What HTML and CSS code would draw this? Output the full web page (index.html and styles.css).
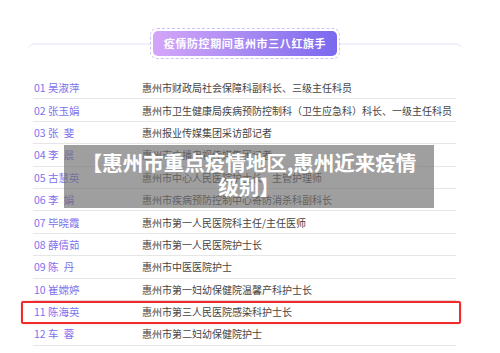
FILE: index.html
```html
<!DOCTYPE html>
<html lang="zh-CN">
<head>
<meta charset="utf-8">
<title>疫情防控期间惠州市三八红旗手</title>
<link rel="stylesheet" href="styles.css">
</head>
<body>
<div class="page">
  <div class="head">
    <div class="pill"><div class="pill-inner">疫情防控期间惠州市三八红旗手</div></div>
  </div>
  <div class="card">
    <ul class="list">
      <li class="row"><span class="name">01 吴淑萍</span><span class="job">惠州市财政局社会保障科副科长、三级主任科员</span></li>
      <li class="row"><span class="name">02 张玉娟</span><span class="job">惠州市卫生健康局疾病预防控制科（卫生应急科）科长、一级主任科员</span></li>
      <li class="row"><span class="name">03 张&ensp;斐</span><span class="job">惠州报业传媒集团采访部记者</span></li>
      <li class="row"><span class="name">04 李&ensp;晨</span><span class="job">惠州市广播电视传媒集团记者</span></li>
      <li class="row"><span class="name">05 古慧英</span><span class="job">惠州市中心人民医院护士长　主管护理师</span></li>
      <li class="row"><span class="name">06 李&ensp;娟</span><span class="job">惠州市疾病预防控制中心寄防消杀科副科长</span></li>
      <li class="row"><span class="name">07 毕晓霞</span><span class="job">惠州市第一人民医院科主任/主任医师</span></li>
      <li class="row"><span class="name">08 薛倩茹</span><span class="job">惠州市第一人民医院护士长</span></li>
      <li class="row"><span class="name">09 陈&ensp;丹</span><span class="job">惠州市中医医院护士</span></li>
      <li class="row"><span class="name">10 崔嫦婷</span><span class="job">惠州市第一妇幼保健院温馨产科护士长</span></li>
      <li class="row row-hl"><span class="name">11 陈海英</span><span class="job">惠州市第三人民医院感染科护士长</span></li>
      <li class="row"><span class="name">12 车&ensp;蓉</span><span class="job">惠州市第二妇幼保健院护士</span></li>
    </ul>
  </div>
  <div class="overlay">【惠州市重点疫情地区,惠州近来疫情级别】</div>
</div>
</body>
</html>
```

FILE: styles.css
```css
* { box-sizing: border-box; }
html, body { margin: 0; padding: 0; background: #fff; }
body {
  width: 500px;
  height: 353px;
  overflow: hidden;
  font-family: "Noto Sans CJK SC", "Noto Sans", sans-serif;
}
.page {
  position: relative;
  padding-top: 28px;
}
.head {
  display: flex;
  justify-content: center;
  width: 436px;
  margin-left: 27px;
  position: relative;
  z-index: 2;
}
.pill {
  background: #fff;
  border: 1px dashed #cfc2f7;
  border-radius: 7px;
  padding: 2px;
}
.pill-inner {
  height: 25px;
  padding: 0 11px;
  border-radius: 5px;
  background: linear-gradient(90deg, #d4a6f9 0%, #a98af3 50%, #7a68ee 100%);
  color: #fff;
  font-weight: 700;
  font-size: 11px;
  letter-spacing: 0.6px;
  line-height: 25px;
  white-space: nowrap;
}
.card {
  width: 436px;
  margin-left: 27px;
  margin-top: -16px;
  border-top: 2px solid #f1effc;
  border-radius: 8px 8px 0 0;
  padding: 32px 7px 0 6px;
}
.list {
  list-style: none;
  margin: 0;
  padding: 0;
}
.row {
  position: relative;
  display: flex;
  align-items: center;
  height: 22.4px;
  border-bottom: 1.5px solid #e6e6e6;
  font-size: 10px;
  white-space: nowrap;
}
.name {
  width: 109px;
  padding-left: 1px;
  color: #8070ee;
  font-size: 10.5px;
}
.job {
  color: #444;
}
.row-hl::after {
  content: "";
  position: absolute;
  left: -12px;
  right: -5px;
  top: 0;
  bottom: -2px;
  border: 2px solid #ee2a2a;
  border-radius: 2px;
  box-shadow: 0 0 2px rgba(238, 42, 42, 0.3);
}
.overlay {
  position: absolute;
  left: 64px;
  top: 145px;
  width: 370px;
  height: 63px;
  padding: 5px 12px 0;
  background: rgba(110, 110, 110, 0.66);
  color: #fff;
  font-weight: 700;
  font-size: 20.5px;
  line-height: 24px;
  text-align: center;
  z-index: 5;
}
```
